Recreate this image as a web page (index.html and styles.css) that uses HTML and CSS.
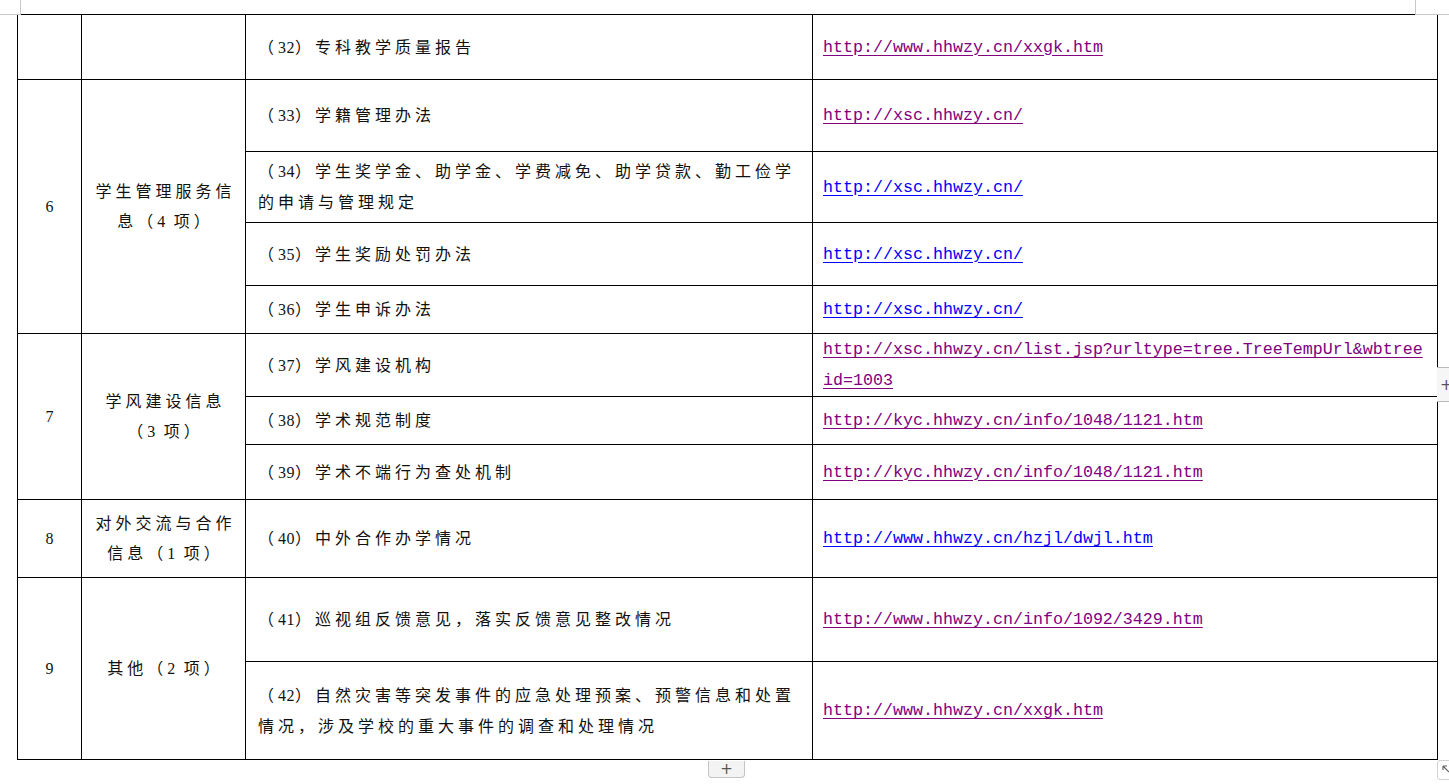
FILE: index.html
```html
<!DOCTYPE html>
<html lang="zh-CN">
<head>
<meta charset="utf-8">
<title>信息公开清单</title>
<link rel="stylesheet" href="styles.css">
</head>
<body>
<div class="page">
  <span class="mark mark-tl"></span>
  <span class="mark mark-tr"></span>
  <table class="grid">
    <colgroup><col class="c1"><col class="c2"><col class="c3"><col class="c4"></colgroup>
    <tbody>
      <tr class="r32">
        <td class="num"></td>
        <td class="cat"></td>
        <td class="item">（<span class="n">32</span>）专科教学质量报告</td>
        <td class="url"><a class="lv" href="#">http://www.hhwzy.cn/xxgk.htm</a></td>
      </tr>
      <tr class="r33">
        <td class="num" rowspan="4">6</td>
        <td class="cat" rowspan="4">学生管理服务信<br>息（<span class="n">4</span> 项）</td>
        <td class="item">（<span class="n">33</span>）学籍管理办法</td>
        <td class="url"><a class="lv" href="#">http://xsc.hhwzy.cn/</a></td>
      </tr>
      <tr class="r34">
        <td class="item">（<span class="n">34</span>）学生奖学金、助学金、学费减免、助学贷款、勤工俭学的申请与管理规定</td>
        <td class="url"><a class="ln" href="#">http://xsc.hhwzy.cn/</a></td>
      </tr>
      <tr class="r35">
        <td class="item">（<span class="n">35</span>）学生奖励处罚办法</td>
        <td class="url"><a class="ln" href="#">http://xsc.hhwzy.cn/</a></td>
      </tr>
      <tr class="r36">
        <td class="item">（<span class="n">36</span>）学生申诉办法</td>
        <td class="url"><a class="ln" href="#">http://xsc.hhwzy.cn/</a></td>
      </tr>
      <tr class="r37">
        <td class="num" rowspan="3">7</td>
        <td class="cat" rowspan="3">学风建设信息<br>（<span class="n">3</span> 项）</td>
        <td class="item">（<span class="n">37</span>）学风建设机构</td>
        <td class="url"><a class="lv" href="#">http://xsc.hhwzy.cn/list.jsp?urltype=tree.TreeTempUrl&amp;wbtreeid=1003</a></td>
      </tr>
      <tr class="r38">
        <td class="item">（<span class="n">38</span>）学术规范制度</td>
        <td class="url"><a class="lv" href="#">http://kyc.hhwzy.cn/info/1048/1121.htm</a></td>
      </tr>
      <tr class="r39">
        <td class="item">（<span class="n">39</span>）学术不端行为查处机制</td>
        <td class="url"><a class="lv" href="#">http://kyc.hhwzy.cn/info/1048/1121.htm</a></td>
      </tr>
      <tr class="r40">
        <td class="num">8</td>
        <td class="cat">对外交流与合作<br>信息（<span class="n">1</span> 项）</td>
        <td class="item">（<span class="n">40</span>）中外合作办学情况</td>
        <td class="url"><a class="ln" href="#">http://www.hhwzy.cn/hzjl/dwjl.htm</a></td>
      </tr>
      <tr class="r41">
        <td class="num" rowspan="2">9</td>
        <td class="cat" rowspan="2">其他（<span class="n">2</span> 项）</td>
        <td class="item">（<span class="n">41</span>）巡视组反馈意见，落实反馈意见整改情况</td>
        <td class="url"><a class="lv" href="#">http://www.hhwzy.cn/info/1092/3429.htm</a></td>
      </tr>
      <tr class="r42">
        <td class="item">（<span class="n">42</span>）自然灾害等突发事件的应急处理预案、预警信息和处置情况，涉及学校的重大事件的调查和处理情况</td>
        <td class="url"><a class="lv" href="#">http://www.hhwzy.cn/xxgk.htm</a></td>
      </tr>
    </tbody>
  </table>
  <div class="add-row">+</div>
  <div class="add-col">+</div>
  <div class="resize">
    <svg width="8" height="8" viewBox="0 0 8 8"><path d="M1 1 L7 7 M1 1 L1 5 M1 1 L5 1" stroke="#666" stroke-width="1.2" fill="none"/></svg>
  </div>
</div>
</body>
</html>
```

FILE: styles.css
```css
html, body {
  margin: 0;
  padding: 0;
  background: #fff;
}
body {
  width: 1449px;
  height: 784px;
  overflow: hidden;
  font-family: "Liberation Serif", "Noto Sans CJK SC", serif;
  color: #111;
  text-spacing-trim: space-all;
}
.page {
  position: relative;
  width: 1449px;
  height: 784px;
  padding: 14px 0 0 17px;
  box-sizing: border-box;
}
.mark {
  position: absolute;
  top: 0;
  height: 14px;
  border-bottom: 1px solid #c9c9c9;
}
.mark-tl {
  left: 0;
  width: 20px;
  border-right: 1px solid #c9c9c9;
}
.mark-tr {
  left: 1415px;
  width: 34px;
  border-left: 1px solid #c9c9c9;
}
.grid {
  border-collapse: collapse;
  table-layout: fixed;
  width: 1420px;
}
.c1 { width: 64px; }
.c2 { width: 164px; }
.c3 { width: 567px; }
.c4 { width: 625px; }
.grid td {
  border: 1px solid #000;
  padding: 0;
  vertical-align: middle;
  font-size: 16px;
  text-spacing-trim: space-all;
}
.r32 { height: 65px; }
.r33 { height: 72px; }
.r34 { height: 71px; }
.r35 { height: 63px; }
.r36 { height: 48px; }
.r37 { height: 63px; }
.r38 { height: 48px; }
.r39 { height: 55px; }
.r40 { height: 78px; }
.r41 { height: 84px; }
.r42 { height: 98px; }
.num {
  text-align: center;
  font-size: 16px;
}
.cat {
  text-align: center;
  letter-spacing: 4px;
  line-height: 30px;
  padding-left: 4px !important;
}
.item {
  letter-spacing: 4px;
  line-height: 31px;
  padding: 0 10px 0 12px !important;
}
.n {
  letter-spacing: 0.5px;
}
.url {
  padding: 0 8px 0 10px !important;
  line-height: 31px;
  word-break: break-all;
  font-family: "Liberation Mono", monospace;
  font-size: 16.67px !important;
}
.url a {
  text-decoration: underline;
  text-underline-offset: 3px;
}
.lv { color: #800080; }
.ln { color: #0000ff; }
.add-row {
  position: absolute;
  left: 708px;
  top: 761px;
  width: 35px;
  height: 16px;
  border: 1px solid #c4c4c4;
  border-top: none;
  border-radius: 0 0 4px 4px;
  background: #f3f3f3;
  color: #555;
  font-family: "DejaVu Sans", sans-serif;
  font-size: 15px;
  line-height: 16px;
  text-align: center;
}
.add-col {
  position: absolute;
  left: 1437px;
  top: 367px;
  width: 20px;
  height: 35px;
  border-top: 1px solid #b9b9b9;
  border-bottom: 1px solid #b9b9b9;
  background: #f6f6f6;
  color: #555;
  font-family: "DejaVu Sans", sans-serif;
  font-size: 15px;
  line-height: 35px;
  padding-left: 3px;
  box-sizing: border-box;
}
.resize {
  position: absolute;
  left: 1437px;
  top: 760px;
  width: 18px;
  height: 20px;
  border: 1px solid #d2d2d2;
  border-radius: 3px;
  background: #fff;
  padding: 4px 0 0 4px;
  box-sizing: border-box;
}
.resize svg { display: block; }
```
